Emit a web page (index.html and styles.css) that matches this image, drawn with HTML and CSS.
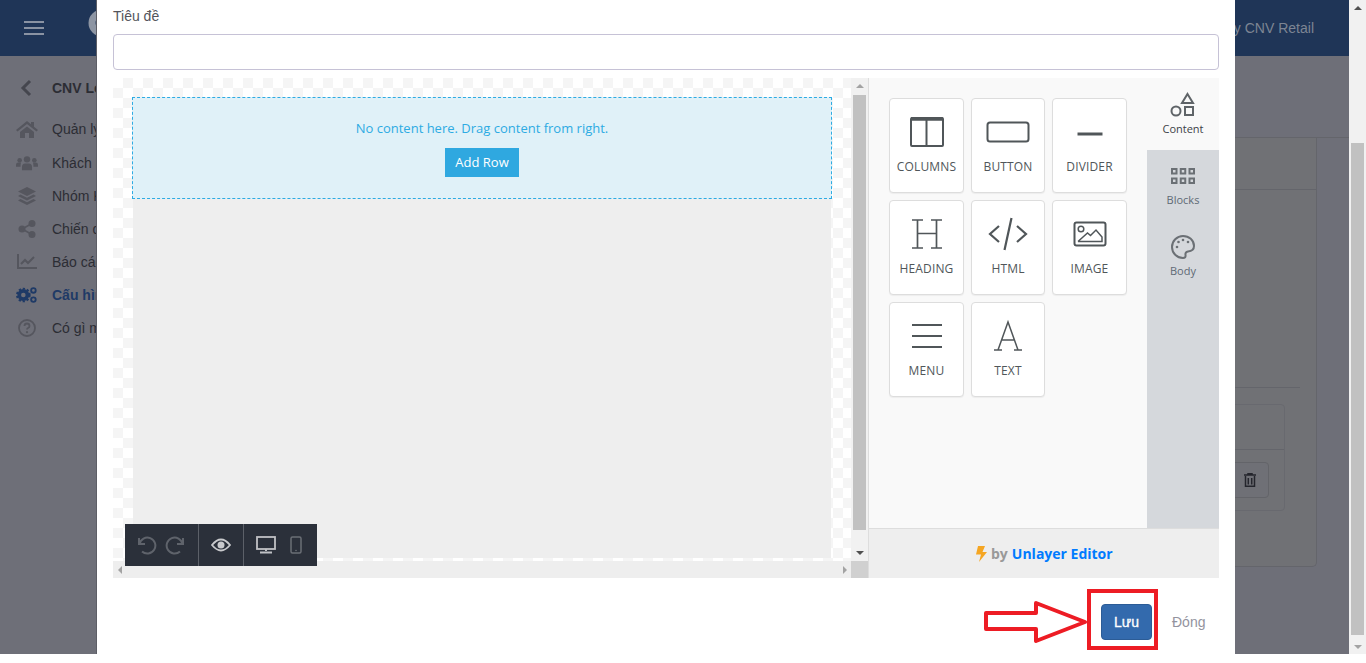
FILE: index.html
```html
<!DOCTYPE html>
<html lang="vi">
<head>
<meta charset="utf-8">
<title>CNV Loyalty</title>
<link rel="stylesheet" href="styles.css">
</head>
<body>
<div class="app">
  <div class="page">
    <header class="topbar">
      <svg class="burger" width="22" height="14" viewBox="0 0 22 14"><path d="M1 1h20M1 7h20M1 13h20" stroke="#8a93a3" stroke-width="2"/></svg>
      <svg class="logo" width="28" height="28" viewBox="0 0 28 28"><circle cx="14" cy="14" r="10" fill="none" stroke="#8d95a3" stroke-width="7"/></svg>
      <span class="powered">Powered by CNV Retail</span>
    </header>
    <div class="under">
      <aside class="side">
        <div class="side-head">
          <svg class="side-ico" width="22" height="18" viewBox="0 0 22 18"><path d="M14 2L7 9l7 7" fill="none" stroke="#45464e" stroke-width="3"/></svg>
          <span class="side-title">CNV Loyalty</span>
        </div>
        <div class="side-item first">
          <svg class="side-ico" width="22" height="18" viewBox="0 0 22 18"><path d="M11 1L0 10l1.5 1.5L11 4l9.500 7.500L22 10l-4-3.300V2h-3v2.300zM4 12v6h5v-5h4v5h5v-6l-7-5.500z" fill="#55565e"/></svg>
          <span>Quản lý khách hàng</span>
        </div>
        <div class="side-item">
          <svg class="side-ico" width="24" height="16" viewBox="0 0 24 16"><g fill="#55565e"><circle cx="12" cy="4" r="3.500"/><circle cx="4" cy="5" r="2.500"/><circle cx="20" cy="5" r="2.500"/><path d="M6.500 16v-3.500Q6.500 8.500 10 8.500h4q3.500 0 3.500 4V16zM0 12v-2q0-2.500 2.500-2.500h3q-.5 1.500-.5 3V12zM24 12v-2q0-2.500-2.500-2.500h-3q.5 1.500.5 3V12z"/></g></svg>
          <span>Khách hàng</span>
        </div>
        <div class="side-item">
          <svg class="side-ico" width="20" height="18" viewBox="0 0 20 18"><g fill="#55565e"><path d="M10 0l9 4.500-9 4.500-9-4.500z"/><path d="M3.500 7.500L10 10.800l6.500-3.300L19 9l-9 4.500L1 9z"/><path d="M3.500 12L10 15.300l6.500-3.300 2.500 1.500-9 4.500-9-4.500z"/></g></svg>
          <span>Nhóm Khách hàng</span>
        </div>
        <div class="side-item">
          <svg class="side-ico" width="18" height="18" viewBox="0 0 18 18"><g fill="#55565e"><circle cx="14" cy="3.500" r="3.500"/><circle cx="4" cy="9" r="3.500"/><circle cx="14" cy="14.500" r="3.500"/></g><path d="M14 3.500L4 9l10 5.500" fill="none" stroke="#55565e" stroke-width="1.600"/></svg>
          <span>Chiến dịch</span>
        </div>
        <div class="side-item">
          <svg class="side-ico" width="20" height="15" viewBox="0 0 20 15"><path d="M1 0v14h19" fill="none" stroke="#55565e" stroke-width="2"/><path d="M4 10l4-4 3 3 6-6" fill="none" stroke="#55565e" stroke-width="2"/></svg>
          <span>Báo cáo</span>
        </div>
        <div class="side-item active">
          <svg class="side-ico" width="24" height="18" viewBox="0 0 24 18"><g fill="none" stroke="#1f3a66"><circle cx="8" cy="9" r="4.500" stroke-width="4"/><circle cx="8" cy="9" r="7" stroke-width="2" stroke-dasharray="2.500 2.000"/><circle cx="19" cy="4" r="2.500" stroke-width="2"/><circle cx="19" cy="14" r="2.500" stroke-width="2"/></g></svg>
          <span>Cấu hình</span>
        </div>
        <div class="side-item">
          <svg class="side-ico" width="18" height="18" viewBox="0 0 18 18"><circle cx="9" cy="9" r="8" fill="none" stroke="#55565e" stroke-width="1.800"/><path d="M6.500 7q0-2.500 2.500-2.500T11.500 7q0 1.300-1.500 2-1 .5-1 1.500" fill="none" stroke="#55565e" stroke-width="1.800"/><circle cx="9" cy="13.200" r="1.100" fill="#55565e"/></svg>
          <span>Có gì mới</span>
        </div>
      </aside>
      <main class="main">
        <div class="crumbs"></div>
        <section class="card">
          <div class="card-head"></div>
          <div class="card-body">
            <div class="rule"></div>
            <div class="box">
              <div class="box-head"></div>
              <div class="box-body">
                <div class="trash">
                  <svg width="12" height="14" viewBox="0 0 12 14"><path d="M0 2h12M4 2V.7h4V2M1.500 3v10.300h9V3M4.300 5v6.500M7.700 5v6.500" fill="none" stroke="#24252c" stroke-width="1.500"/></svg>
                </div>
              </div>
            </div>
          </div>
        </section>
      </main>
    </div>
  </div>

  <div class="scrollbar">
    <span class="sb-arrow up"></span>
    <span class="sb-thumb"></span>
    <span class="sb-arrow down"></span>
  </div>

  <div class="modal">
    <label class="field-label" for="title">Tiêu đề</label>
    <input class="field" id="title" type="text">
    <div class="editor">
      <div class="canvas">
        <div class="stage">
          <div class="sheet">
            <div class="empty-row">
              <p class="empty-text">No content here. Drag content from right.</p>
              <span class="add-row">Add Row</span>
            </div>
          </div>
        </div>
        <div class="vbar">
          <span class="mini-arrow mini-up"></span>
          <span class="vthumb"></span>
          <span class="mini-arrow mini-down"></span>
        </div>
        <div class="hbar">
          <span class="mini-arrow mini-left"></span>
          <span class="mini-arrow mini-right"></span>
        </div>
        <div class="corner"></div>
        <div class="devicebar">
          <div class="dev-group dev-history">
            <svg width="22" height="20" viewBox="0 0 22 20"><path d="M4 3v6h6M4.500 9A8 8 0 1 1 7 16.500" fill="none" stroke="#5f636b" stroke-width="2"/></svg>
            <svg width="22" height="20" viewBox="0 0 22 20"><path d="M18 3v6h-6M17.500 9A8 8 0 1 0 15 16.500" fill="none" stroke="#5f636b" stroke-width="2"/></svg>
          </div>
          <div class="dev-group dev-eye">
            <svg width="20" height="14" viewBox="0 0 20 14"><path d="M1 7q9-11 18 0q-9 11-18 0z" fill="none" stroke="#c9cacd" stroke-width="1.800"/><circle cx="10" cy="7" r="3.500" fill="#c9cacd"/></svg>
          </div>
          <div class="dev-group dev-devices">
            <svg width="20" height="18" viewBox="0 0 20 18"><rect x="1" y="1" width="18" height="12" fill="none" stroke="#c0c1c5" stroke-width="1.800"/><path d="M10 13v2M4 16.500h12" stroke="#c0c1c5" stroke-width="2"/></svg>
            <svg width="12" height="18" viewBox="0 0 12 18"><rect x="1" y="1" width="10" height="16" rx="1.500" fill="none" stroke="#6b6f76" stroke-width="1.500"/><circle cx="6" cy="14.500" r=".8" fill="#6b6f76"/></svg>
          </div>
        </div>
      </div>
      <div class="panel">
        <div class="panel-top">
          <div class="tiles">
            <div class="tile">
              <svg width="36" height="32" viewBox="0 0 36 32"><path d="M2 2h31q1 0 1 1v26q0 1-1 1H3q-1 0-1-1V3q0-1 1-1z" fill="none" stroke="#505659" stroke-width="2"/><path d="M2 3h32" stroke="#505659" stroke-width="3.500"/><path d="M17.500 3v27" stroke="#505659" stroke-width="2"/></svg>
              <span>COLUMNS</span>
            </div>
            <div class="tile">
              <svg width="44" height="32" viewBox="0 0 44 32"><rect x="1.500" y="6.500" width="41" height="19" rx="2.500" fill="none" stroke="#505659" stroke-width="2"/></svg>
              <span>BUTTON</span>
            </div>
            <div class="tile">
              <svg width="28" height="32" viewBox="0 0 28 32"><path d="M1.500 18h25" stroke="#505659" stroke-width="3"/></svg>
              <span>DIVIDER</span>
            </div>
            <div class="tile">
              <svg width="32" height="32" viewBox="0 0 32 32"><path d="M1 2h11M20 2h11M1 30h11M20 30h11M6.500 2v28M25.500 2v28M6.500 15.500h19" fill="none" stroke="#505659" stroke-width="1.700"/></svg>
              <span>HEADING</span>
            </div>
            <div class="tile">
              <svg width="40" height="34" viewBox="0 0 40 34"><path d="M11 9L2 17l9 8M29 9l9 8-9 8M23.500 1l-7 32" fill="none" stroke="#505659" stroke-width="2.200"/></svg>
              <span>HTML</span>
            </div>
            <div class="tile">
              <svg width="34" height="26" viewBox="0 0 34 26"><rect x="1.500" y="1.500" width="31" height="23" rx="2" fill="none" stroke="#505659" stroke-width="2"/><circle cx="8" cy="8" r="2.800" fill="none" stroke="#505659" stroke-width="1.500"/><path d="M5 20.500h24v-4.500l-6-7-5.500 5.500-3-2.500-9.500 8.500" fill="none" stroke="#505659" stroke-width="1.500"/></svg>
              <span>IMAGE</span>
            </div>
            <div class="tile">
              <svg width="30" height="32" viewBox="0 0 30 32"><path d="M0 5h30M0 16h30M0 27h30" stroke="#505659" stroke-width="2.200"/></svg>
              <span>MENU</span>
            </div>
            <div class="tile">
              <svg width="28" height="32" viewBox="0 0 28 32"><path d="M4 30L14 2l10 28M7.500 20h13M0 30h8M20 30h8" fill="none" stroke="#505659" stroke-width="1.500"/></svg>
              <span>TEXT</span>
            </div>
          </div>
          <nav class="tabs">
            <div class="tab tab-on">
              <svg width="26" height="26" viewBox="0 0 26 26"><g fill="none" stroke="#5f6468" stroke-width="2"><path d="M17.500 2l5.500 9H12z"/><rect x="15" y="15" width="8" height="8"/><circle cx="6" cy="19" r="4.500"/></g></svg>
              <span>Content</span>
            </div>
            <div class="tab tab-blocks">
              <svg width="24" height="16" viewBox="0 0 24 16"><g fill="none" stroke="#6b7075" stroke-width="2"><rect x="1" y="1" width="4.500" height="4.500"/><rect x="9.750" y="1" width="4.500" height="4.500"/><rect x="18.500" y="1" width="4.500" height="4.500"/><rect x="1" y="10.500" width="4.500" height="4.500"/><rect x="9.750" y="10.500" width="4.500" height="4.500"/><rect x="18.500" y="10.500" width="4.500" height="4.500"/></g></svg>
              <span>Blocks</span>
            </div>
            <div class="tab">
              <svg width="24" height="24" viewBox="0 0 24 24"><path d="M12 1a11 11 0 1 0 0 22q3 0 2.500-3-.5-3 2.500-3.500 6-.5 6-5.500C23 5 18 1 12 1z" fill="none" stroke="#6b7075" stroke-width="2"/><g fill="#6b7075"><circle cx="6" cy="12" r="1.300"/><circle cx="7.500" cy="7" r="1.300"/><circle cx="12" cy="5" r="1.300"/><circle cx="17" cy="7" r="1.300"/></g></svg>
              <span>Body</span>
            </div>
          </nav>
        </div>
        <div class="panel-foot">
          <svg width="11" height="16" viewBox="0 0 11 16"><path d="M2 0h7L6.500 6H11L3 16l2-7.500H0z" fill="#f5a623"/></svg>
          <span class="by">by</span>
          <span class="brand">Unlayer Editor</span>
        </div>
      </div>
    </div>
    <div class="modal-foot">
      <button class="btn-save" type="button">Lưu</button>
      <span class="btn-close">Đóng</span>
    </div>
    <svg class="mark-arrow" width="106" height="46" viewBox="0 0 106 46"><path d="M2 13h50V3l49 19-49 19V29H2z" fill="#fff" stroke="#ed1c24" stroke-width="4" stroke-linejoin="round"/></svg>
    <div class="mark-box"></div>
  </div>
</div>
</body>
</html>
```
FILE: styles.css
```css
* { box-sizing: border-box; }
html, body { margin: 0; padding: 0; background: #fff; }
body { font-family: "Liberation Sans", Arial, sans-serif; font-size: 14px; overflow: hidden; }
p { margin: 0; }

.app { position: relative; height: 654px; overflow: hidden; display: flex; }
.page { flex: 1; min-width: 0; display: flex; flex-direction: column; background: #6e6f78; }

.topbar { height: 56px; flex: none; background: #1f3557; display: flex; align-items: center; padding-left: 23px; }
.burger { flex: none; }
.logo { flex: none; margin-left: 43px; margin-bottom: 10px; }
.powered { margin-left: auto; margin-right: 35px; color: #7d8593; font-size: 14px; }

.under { flex: 1; display: flex; min-height: 0; }
.side { width: 240px; flex: none; padding-top: 15px; color: #2c2d34; }
.side-head { height: 34px; display: flex; align-items: center; margin-bottom: 7px; }
.side-title { font-weight: 700; }
.side-item { height: 33px; display: flex; align-items: center; }
.side-item.first { height: 34px; }
.side-item.active { color: #1f3a66; font-weight: 700; }
.side-ico { flex: none; margin-left: 16px; margin-right: 14px; width: 22px; }

.main { flex: 1; min-width: 0; display: flex; flex-direction: column; }
.crumbs { height: 82px; flex: none; border-bottom: 1px solid #64656b; }
.card { width: 1000px; height: 429px; flex: none; margin-left: auto; margin-right: 32px; background: #707175; border: 1px solid #64656b; border-top: 0; border-radius: 0 0 5px 5px; }
.card-head { height: 52px; border-bottom: 1px solid #64656b; }
.card-body { padding: 0 16px; }
.rule { height: 198px; border-bottom: 1px solid #64656b; }
.box { margin-top: 16px; margin-right: 15px; height: 107px; border: 1px solid #68696f; border-radius: 4px; }
.box-head { height: 45px; border-bottom: 1px solid #64656b; }
.box-body { padding: 12px 15px; display: flex; justify-content: flex-end; }
.trash { width: 60px; height: 36px; display: flex; align-items: center; justify-content: flex-end; padding-right: 12px; border: 1px solid #636469; border-radius: 4px; background: #6f7076; }

.scrollbar { width: 17px; flex: none; background: #f1f1f1; display: flex; flex-direction: column; align-items: center; position: relative; }
.sb-thumb { width: 13px; position: absolute; top: 143px; bottom: 19px; background: #c1c1c1; }
.sb-arrow { position: absolute; border-left: 4px solid transparent; border-right: 4px solid transparent; }
.sb-arrow.up { top: 6px; border-bottom: 4px solid #505050; }
.sb-arrow.down { bottom: 5px; border-top: 4px solid #a3a3a3; }

.modal { position: absolute; left: 97px; top: 0; width: 1138px; height: 654px; background: #fff; padding: 8px 16px 0; box-shadow: -1px 0 0 #5d5e66; display: flex; flex-direction: column; }
.field-label { display: block; height: 16px; line-height: 16px; color: #54555c; font-size: 14px; }
.field { display: block; width: 100%; height: 36px; margin-top: 10px; flex: none; border: 1px solid #c6c2d6; border-radius: 4px; background: #fff; }

.editor { height: 500px; flex: none; margin-top: 8px; display: flex; font-family: "Open Sans", sans-serif; }
.canvas { width: 755px; flex: none; position: relative; display: grid; grid-template-columns: 738px 17px; grid-template-rows: 483px 17px; }
.stage { padding: 19px 20px 3px; background: conic-gradient(#f5f5f5 25%, #fff 0 50%, #f5f5f5 0 75%, #fff 0) 0 0 / 20px 20px; overflow: hidden; display: flex; }
.sheet { flex: 1; background: #eee; display: flex; flex-direction: column; }
.empty-row { height: 102px; margin: 0 -1px; background: #e0f1f8; border: 1px dashed #2dabe3; display: flex; flex-direction: column; align-items: center; padding-top: 21px; }
.empty-text { color: #2dabe3; font-size: 13px; line-height: 18px; }
.add-row { margin-top: 11px; width: 74px; height: 29px; background: #2fa8e0; color: #fff; font-size: 13px; line-height: 29px; text-align: center; }

.vbar { position: relative; background: #f1f1f1; }
.vthumb { position: absolute; left: 2px; top: 17px; width: 13px; height: 435px; background: #c1c1c1; }
.hbar { position: relative; background: #eee; }
.corner { background: #d0d0d0; }
.mini-arrow { position: absolute; width: 0; height: 0; }
.mini-up { top: 6px; left: 5px; border-left: 4px solid transparent; border-right: 4px solid transparent; border-bottom: 4px solid #a3a3a3; }
.mini-down { bottom: 6px; left: 5px; border-left: 4px solid transparent; border-right: 4px solid transparent; border-top: 4px solid #505050; }
.mini-left { top: 5px; left: 5px; border-top: 4px solid transparent; border-bottom: 4px solid transparent; border-right: 4px solid #a3a3a3; }
.mini-right { top: 5px; right: 4px; border-top: 4px solid transparent; border-bottom: 4px solid transparent; border-left: 4px solid #a3a3a3; }

.devicebar { position: absolute; left: 12px; top: 446px; width: 192px; height: 42px; background: #2b303a; display: flex; }
.dev-group { display: flex; align-items: center; justify-content: center; border-right: 1px solid #5c6068; height: 100%; }
.dev-group:last-child { border-right: 0; }
.dev-history { width: 74px; gap: 8px; padding-right: 2px; }
.dev-eye { width: 45px; }
.dev-devices { flex: 1; gap: 14px; padding-right: 3px; }

.panel { flex: 1; min-width: 0; margin-left: 0; border-left: 1px solid #ddd; display: flex; flex-direction: column; background: #f9f9f9; }
.panel-top { height: 450px; flex: none; display: flex; }
.tiles { flex: 1; padding: 20px 0 0 20.250px; display: grid; grid-template-columns: repeat(3, 74.500px); grid-auto-rows: 95px; column-gap: 7px; row-gap: 7px; align-content: start; }
.tile { background: #fff; border: 1px solid #ddd; border-radius: 4px; box-shadow: 0 1px 1px rgba(0,0,0,.05); display: flex; flex-direction: column; align-items: center; color: #505659; font-size: 12px; position: relative; padding-top: 16px; }
.tile svg { height: 34px; flex: none; }
.tile span { position: absolute; top: 60px; left: 0; right: 0; text-align: center; line-height: 16px; letter-spacing: .15px; }

.tabs { width: 72px; flex: none; background: #d5d8dc; display: flex; flex-direction: column; }
.tab { height: 71px; flex: none; display: flex; flex-direction: column; align-items: center; color: #5f6a75; font-size: 11px; position: relative; padding-top: 14px; }
.tab span { position: absolute; top: 42px; line-height: 16px; }
.tab svg { flex: none; }
.tab-blocks { padding-top: 18px; }
.tab-on { height: 72px; background: #f9f9f9; color: #3d4248; padding-top: 14px; }
.tab-on span { top: 43px; }

.panel-foot { flex: 1; background: #eee; border-top: 1px solid #ddd; display: flex; align-items: center; padding-left: 107px; font-size: 14px; font-weight: 700; }
.by { color: #999; margin-left: 4px; }
.brand { color: #007bff; margin-left: 4px; }

.modal-foot { display: flex; align-items: center; padding-top: 26px; padding-left: 988px; }
.btn-save { width: 51px; height: 36px; background: #336aad; color: #fff; border: 1px solid #2c5c96; border-radius: 4px; font-family: "Liberation Sans", Arial, sans-serif; font-size: 14px; font-weight: 400; padding: 0; -webkit-text-stroke: .3px #fff; }
.btn-close { margin-left: 20px; color: #93939e; font-size: 14px; }

.mark-arrow { position: absolute; left: 887px; top: 600px; }
.mark-box { position: absolute; left: 990px; top: 589px; width: 71px; height: 61px; border: 4px solid #ed1c24; }
```
